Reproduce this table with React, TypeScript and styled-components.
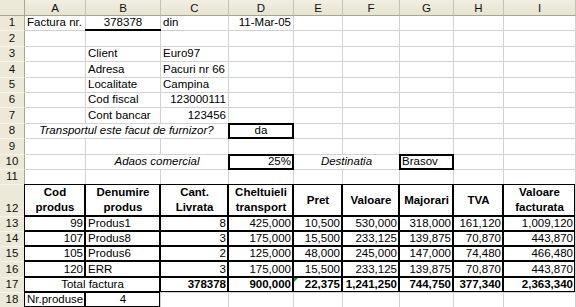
import styled, { createGlobalStyle, css } from "styled-components";

const GlobalStyle = createGlobalStyle`
  html, body {
    margin: 0;
    padding: 0;
    background: #fff;
    overflow: hidden;
  }
  body {
    font-family: "Liberation Sans", Arial, sans-serif;
    color: #000;
  }
`;

type Align = "left" | "center" | "right";
type Frame = "box" | "thin" | "head" | "under";

type CellData = {
  t?: string;
  al?: Align;
  b?: boolean;
  i?: boolean;
  span?: number;
  frame?: Frame;
  flag?: boolean;
  mid?: boolean;
};

const columns = ["A", "B", "C", "D", "E", "F", "G", "H", "I"];
const colWidths = [61, 75, 68, 65, 49, 57, 54, 50, 72];
const rowHeights = [
  ...Array(11).fill(15.4),
  31.5,
  ...Array(6).fill(15.2),
];

const empty = (n: number): CellData[] => Array.from({ length: n }, () => ({}));

const th = (t: string): CellData => ({ t, b: true, al: "center", mid: true, frame: "head" });
const num = (t: string, b = false): CellData => ({ t, al: "right", frame: "thin", b });
const txt = (t: string): CellData => ({ t, frame: "thin" });

const dataRow = (v: string[]): CellData[] => [
  num(v[0]),
  txt(v[1]),
  ...v.slice(2).map((x) => num(x)),
];

const sheet: CellData[][] = [
  [
    { t: "Factura nr." },
    { t: "378378", al: "center", frame: "under" },
    { t: "din" },
    { t: "11-Mar-05", al: "right" },
    ...empty(5),
  ],
  empty(9),
  [{}, { t: "Client" }, { t: "Euro97" }, ...empty(6)],
  [{}, { t: "Adresa" }, { t: "Pacuri nr 66" }, ...empty(6)],
  [{}, { t: "Localitate" }, { t: "Campina" }, ...empty(6)],
  [{}, { t: "Cod fiscal" }, { t: "123000111", al: "right" }, ...empty(6)],
  [{}, { t: "Cont bancar" }, { t: "123456", al: "right" }, ...empty(6)],
  [
    { t: "Transportul este facut de furnizor?", i: true, al: "center", span: 3 },
    { t: "da", al: "center", frame: "box" },
    ...empty(5),
  ],
  empty(9),
  [
    {},
    { t: "Adaos comercial", i: true, al: "center", span: 2 },
    { t: "25%", al: "right", frame: "box" },
    { t: "Destinatia", i: true, al: "center", span: 2 },
    { t: "Brasov", frame: "box" },
    ...empty(2),
  ],
  empty(9),
  [
    th("Cod\nprodus"),
    th("Denumire\nprodus"),
    th("Cant.\nLivrata"),
    th("Cheltuieli\ntransport"),
    th("Pret"),
    th("Valoare"),
    th("Majorari"),
    th("TVA"),
    th("Valoare\nfacturata"),
  ],
  dataRow(["99", "Produs1", "8", "425,000", "10,500", "530,000", "318,000", "161,120", "1,009,120"]),
  dataRow(["107", "Produs8", "3", "175,000", "15,500", "233,125", "139,875", "70,870", "443,870"]),
  dataRow(["105", "Produs6", "2", "125,000", "48,000", "245,000", "147,000", "74,480", "466,480"]),
  dataRow(["120", "ERR", "3", "175,000", "15,500", "233,125", "139,875", "70,870", "443,870"]),
  [
    { t: "Total factura", al: "center", span: 2, frame: "thin" },
    num("378378", true),
    num("900,000", true),
    { ...num("22,375", true), flag: true },
    num("1,241,250", true),
    num("744,750", true),
    num("377,340", true),
    num("2,363,340", true),
  ],
  [
    { t: "Nr.produse", frame: "thin" },
    { t: "4", al: "center", frame: "thin" },
    ...empty(7),
  ],
];

export default function App() {
  return (
    <>
      <GlobalStyle />
      <Sheet>
        <Corner />
        {columns.map((c) => (
          <ColHead key={c}>{c}</ColHead>
        ))}
        {sheet.map((row, r) => [
          <RowHead key={`h${r}`}>{r + 1}</RowHead>,
          ...row.map((cell, c) => (
            <Cell
              key={`${r}-${c}`}
              $al={cell.al ?? "left"}
              $b={cell.b}
              $i={cell.i}
              $span={cell.span ?? 1}
              $frame={cell.frame}
              $mid={cell.mid}
              $flag={cell.flag}
            >
              {cell.t}
            </Cell>
          )),
        ])}
      </Sheet>
    </>
  );
}

const Sheet = styled.div`
  display: grid;
  grid-template-columns: 25px ${colWidths.map((w) => `${w}px`).join(" ")};
  grid-template-rows: 16px ${rowHeights.map((h) => `${h}px`).join(" ")};
  width: 576px;
  font-size: 11.5px;
`;

const Corner = styled.div`
  background: #ece9d8;
  border-right: 1px solid #a8a592;
  border-bottom: 1px solid #a8a592;
`;

const ColHead = styled.div`
  display: flex;
  align-items: center;
  justify-content: center;
  background: linear-gradient(#f1efe3, #e6e3d1);
  border-right: 1px solid #c6c2ae;
  border-bottom: 1px solid #a8a592;
  font-size: 11.5px;
  color: #111;
`;

const RowHead = styled.div`
  display: flex;
  align-items: flex-end;
  justify-content: center;
  padding-bottom: 1px;
  background: #ece9d8;
  border-right: 1px solid #a8a592;
  border-bottom: 1px solid #f7f5ec;
  font-size: 11.5px;
  line-height: 13px;
  color: #111;
`;

const frames = {
  under: css`
    &::after {
      content: "";
      position: absolute;
      left: -1px;
      right: -1px;
      bottom: -1px;
      height: 2px;
      background: #000;
    }
  `,
  box: css`
    &::after {
      content: "";
      position: absolute;
      inset: -1px;
      border: 2px solid #000;
    }
  `,
  thin: css`
    &::after {
      content: "";
      position: absolute;
      top: -1px;
      left: -1px;
      right: 0;
      bottom: 0;
      border: 1px solid #000;
    }
  `,
  head: css`
    &::after {
      content: "";
      position: absolute;
      top: -1px;
      left: -1px;
      right: 0;
      bottom: -1px;
      border: 1px solid #000;
      border-bottom-width: 2px;
    }
  `,
};

const justify = { left: "flex-start", center: "center", right: "flex-end" };

const Cell = styled.div<{
  $al: Align;
  $b?: boolean;
  $i?: boolean;
  $span: number;
  $frame?: Frame;
  $mid?: boolean;
  $flag?: boolean;
}>`
  position: relative;
  grid-column: span ${(p) => p.$span};
  display: flex;
  align-items: ${(p) => (p.$mid ? "center" : "flex-end")};
  justify-content: ${(p) => justify[p.$al]};
  text-align: ${(p) => p.$al};
  padding: 0 2px 1px 2px;
  border-right: 1px solid #d2d2d2;
  border-bottom: 1px solid #d2d2d2;
  font-size: 11.5px;
  line-height: ${(p) => (p.$mid ? "15px" : "13px")};
  font-weight: ${(p) => (p.$b ? 700 : 400)};
  font-style: ${(p) => (p.$i ? "italic" : "normal")};
  white-space: ${(p) => (p.$mid ? "pre-line" : "nowrap")};
  min-width: 0;
  ${(p) => p.$frame && frames[p.$frame]}
  ${(p) =>
    p.$flag &&
    css`
      &::before {
        content: "";
        position: absolute;
        top: 0;
        left: 0;
        border-top: 4px solid #1f9a1f;
        border-right: 4px solid transparent;
      }
    `}
`;
